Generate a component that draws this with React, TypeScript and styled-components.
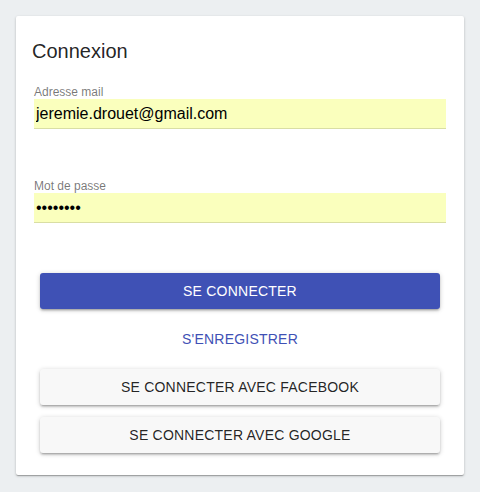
import React from "react";
import styled, { createGlobalStyle } from "styled-components";

const Global = createGlobalStyle`
  html, body {
    margin: 0;
    padding: 0;
    background: #eceff1;
    font-family: "Liberation Sans", Arial, sans-serif;
  }
  * { box-sizing: border-box; }
`;

const Page = styled.div`
  padding: 16px;
  width: 480px;
`;

const Card = styled.form`
  display: flex;
  flex-direction: column;
  width: 448px;
  background: #fff;
  border-radius: 2px;
  padding: 23px 0 22px;
  box-shadow: 0 1px 3px 0 rgba(0, 0, 0, 0.2), 0 1px 1px 0 rgba(0, 0, 0, 0.14),
    0 2px 1px -1px rgba(0, 0, 0, 0.12);
`;

const Title = styled.h1`
  margin: 0 0 22px;
  padding: 0 16px;
  font-size: 20px;
  line-height: 24px;
  font-weight: 400;
  color: rgba(0, 0, 0, 0.87);
`;

const Field = styled.label<{ $gap?: number }>`
  display: flex;
  flex-direction: column;
  margin: ${(p) => p.$gap ?? 0}px 18px 0;
`;

const Label = styled.span`
  font-size: 12px;
  line-height: 14px;
  color: rgba(0, 0, 0, 0.54);
`;

const Input = styled.input`
  height: 30px;
  border: none;
  border-bottom: 1px solid rgba(0, 0, 0, 0.13);
  background: #faffbd;
  padding: 0 2px;
  margin: 0;
  font-family: "Liberation Sans", Arial, sans-serif;
  font-size: 16px;
  color: #000;
  outline: none;
  border-radius: 0;
`;

const Actions = styled.div`
  display: flex;
  flex-direction: column;
  margin: 50px 24px 0;
`;

const Button = styled.button<{ $variant: "primary" | "text" | "plain"; $gap?: number }>`
  height: 36px;
  margin-top: ${(p) => p.$gap ?? 0}px;
  border: none;
  border-radius: 3px;
  font-family: "Liberation Sans", Arial, sans-serif;
  font-size: 14px;
  font-weight: 400;
  letter-spacing: 0.22px;
  text-transform: uppercase;
  cursor: pointer;
  padding: 0 16px;
  background: ${(p) =>
    p.$variant === "primary" ? "#3f51b5" : p.$variant === "plain" ? "#f8f8f8" : "transparent"};
  color: ${(p) =>
    p.$variant === "primary" ? "#ffffff" : p.$variant === "text" ? "#3f51b5" : "rgba(0,0,0,0.87)"};
  box-shadow: ${(p) =>
    p.$variant === "text"
      ? "none"
      : "0 1px 5px 0 rgba(0,0,0,0.2), 0 2px 2px 0 rgba(0,0,0,0.14), 0 3px 1px -2px rgba(0,0,0,0.12)"};
`;

export default function App() {
  return (
    <Page>
      <Global />
      <Card onSubmit={(e) => e.preventDefault()}>
        <Title>Connexion</Title>
        <Field>
          <Label>Adresse mail</Label>
          <Input type="email" defaultValue="jeremie.drouet@gmail.com" readOnly />
        </Field>
        <Field $gap={50}>
          <Label>Mot de passe</Label>
          <Input type="password" defaultValue="password" readOnly />
        </Field>
        <Actions>
          <Button type="button" $variant="primary">Se connecter</Button>
          <Button type="button" $variant="text" $gap={12}>S'enregistrer</Button>
          <Button type="button" $variant="plain" $gap={12}>Se connecter avec Facebook</Button>
          <Button type="button" $variant="plain" $gap={12}>Se connecter avec Google</Button>
        </Actions>
      </Card>
    </Page>
  );
}
